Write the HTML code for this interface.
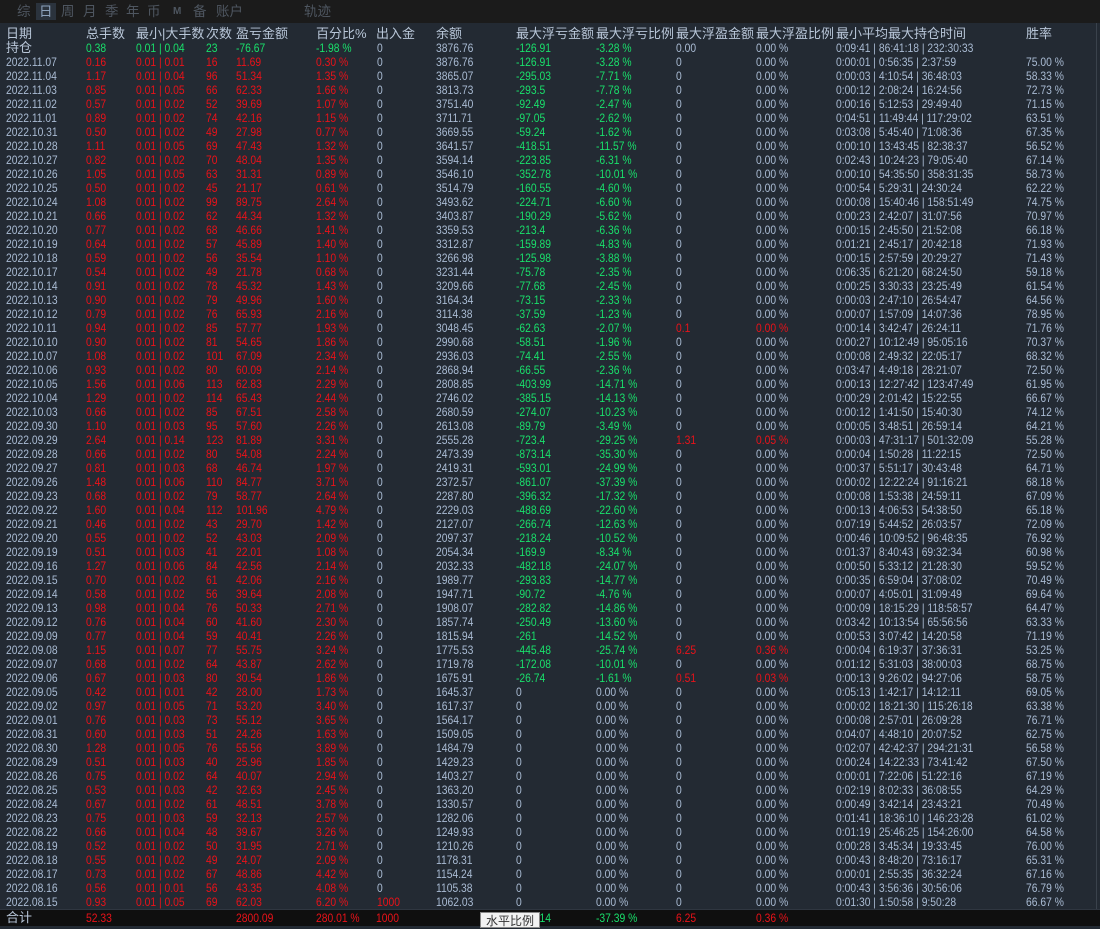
<!DOCTYPE html>
<html><head><meta charset="utf-8"><style>
*{margin:0;padding:0;box-sizing:border-box}
body{width:1100px;height:926px;background:#232a33;overflow:hidden;position:relative;font-family:"Liberation Sans","Noto Sans CJK SC",sans-serif;font-size:12px;color:#a9bbd3}
#top{position:absolute;left:0;top:0;width:1100px;height:23px;background:#1b1b1b}
#top span{position:absolute;top:3px;font-size:13.5px;line-height:17px;color:#4e5660}
#top .on{background:#2b333d;color:#8ea3bd;padding:0 3px;margin-left:-3px}
#hd{position:absolute;top:25px;left:0;height:17px;width:1100px;color:#b8c6d8}
#hd span{position:absolute;top:0;line-height:17px;font-size:13px}
#t{position:absolute;top:41px;left:0;width:1100px}
#t div{position:relative;height:14px;line-height:14px;white-space:nowrap}
#t a{position:absolute;top:0;transform:scaleX(.86);transform-origin:0 50%;color:#a9bbd3;text-decoration:none}
#t a:nth-child(1){left:6px}
#t a:nth-child(2){left:86px;color:#ea1219}
#t a:nth-child(3){left:136px;color:#ea1219}
#t a:nth-child(4){left:206px;color:#ea1219}
#t a:nth-child(5){left:236px;color:#ea1219}
#t a:nth-child(6){left:316px;color:#ea1219}
#t a:nth-child(7){left:377px}
#t a:nth-child(8){left:436px}
#t a:nth-child(9){left:516px;color:#19e06b}
#t a:nth-child(10){left:596px;color:#19e06b}
#t a:nth-child(11){left:676px}
#t a:nth-child(12){left:756px}
#t a:nth-child(13){left:836px}
#t a:nth-child(14){left:1026px}
#t a.R{color:#ea1219}
#t a.n{color:#a9bbd3}
#t div.p a{color:#19e06b}
#t div.p a:nth-child(1){font-size:13px;transform:none;color:#b8c6d8}
#t div.p a:nth-child(n+7){color:#a9bbd3}
#t div.p a:nth-child(9),#t div.p a:nth-child(10){color:#19e06b}
#tot{position:absolute;left:0;top:909px;width:1100px;height:17px;background:#0f0f0f;border-top:1px solid #2f3640}
#tot span{position:absolute;top:1px;line-height:14px;transform:scaleX(.86);transform-origin:0 50%;color:#ea1219}
#tip{position:absolute;left:480px;top:912px;width:60px;height:16px;background:#f2f2f2;border:1px solid #888;color:#333;font-size:12px;line-height:16px;text-align:center}
#sb{position:absolute;left:1096px;top:23px;width:1px;height:886px;background:#3a424c}
</style></head><body>
<div id="top">
<span style="left:17px">综</span><span class="on" style="left:39px">日</span><span style="left:61px">周</span><span style="left:83px">月</span><span style="left:105px">季</span><span style="left:126px">年</span><span style="left:147px">币</span><span style="left:173px;font-size:10px;font-weight:bold">M</span><span style="left:193px">备</span><span style="left:216px">账户</span><span style="left:304px">轨迹</span>
</div>
<div id="sb"></div>
<div id="hd">
<span style="left:6px">日期</span><span style="left:86px">总手数</span><span style="left:136px">最小|大手数</span><span style="left:206px">次数</span><span style="left:236px">盈亏金额</span><span style="left:316px">百分比%</span><span style="left:376px">出入金</span><span style="left:436px">余额</span><span style="left:516px">最大浮亏金额</span><span style="left:596px">最大浮亏比例</span><span style="left:676px">最大浮盈金额</span><span style="left:756px">最大浮盈比例</span><span style="left:836px">最小平均最大持仓时间</span><span style="left:1026px">胜率</span>
</div>
<div id="t">
<div class="p"><a>持仓</a><a>0.38</a><a>0.01 | 0.04</a><a>23</a><a>-76.67</a><a>-1.98 %</a><a>0</a><a>3876.76</a><a>-126.91</a><a>-3.28 %</a><a>0.00</a><a>0.00 %</a><a>0:09:41 | 86:41:18 | 232:30:33</a><a></a></div>
<div><a>2022.11.07</a><a>0.16</a><a>0.01 | 0.01</a><a>16</a><a>11.69</a><a>0.30 %</a><a>0</a><a>3876.76</a><a>-126.91</a><a>-3.28 %</a><a>0</a><a>0.00 %</a><a>0:00:01 | 0:56:35 | 2:37:59</a><a>75.00 %</a></div>
<div><a>2022.11.04</a><a>1.17</a><a>0.01 | 0.04</a><a>96</a><a>51.34</a><a>1.35 %</a><a>0</a><a>3865.07</a><a>-295.03</a><a>-7.71 %</a><a>0</a><a>0.00 %</a><a>0:00:03 | 4:10:54 | 36:48:03</a><a>58.33 %</a></div>
<div><a>2022.11.03</a><a>0.85</a><a>0.01 | 0.05</a><a>66</a><a>62.33</a><a>1.66 %</a><a>0</a><a>3813.73</a><a>-293.5</a><a>-7.78 %</a><a>0</a><a>0.00 %</a><a>0:00:12 | 2:08:24 | 16:24:56</a><a>72.73 %</a></div>
<div><a>2022.11.02</a><a>0.57</a><a>0.01 | 0.02</a><a>52</a><a>39.69</a><a>1.07 %</a><a>0</a><a>3751.40</a><a>-92.49</a><a>-2.47 %</a><a>0</a><a>0.00 %</a><a>0:00:16 | 5:12:53 | 29:49:40</a><a>71.15 %</a></div>
<div><a>2022.11.01</a><a>0.89</a><a>0.01 | 0.02</a><a>74</a><a>42.16</a><a>1.15 %</a><a>0</a><a>3711.71</a><a>-97.05</a><a>-2.62 %</a><a>0</a><a>0.00 %</a><a>0:04:51 | 11:49:44 | 117:29:02</a><a>63.51 %</a></div>
<div><a>2022.10.31</a><a>0.50</a><a>0.01 | 0.02</a><a>49</a><a>27.98</a><a>0.77 %</a><a>0</a><a>3669.55</a><a>-59.24</a><a>-1.62 %</a><a>0</a><a>0.00 %</a><a>0:03:08 | 5:45:40 | 71:08:36</a><a>67.35 %</a></div>
<div><a>2022.10.28</a><a>1.11</a><a>0.01 | 0.05</a><a>69</a><a>47.43</a><a>1.32 %</a><a>0</a><a>3641.57</a><a>-418.51</a><a>-11.57 %</a><a>0</a><a>0.00 %</a><a>0:00:10 | 13:43:45 | 82:38:37</a><a>56.52 %</a></div>
<div><a>2022.10.27</a><a>0.82</a><a>0.01 | 0.02</a><a>70</a><a>48.04</a><a>1.35 %</a><a>0</a><a>3594.14</a><a>-223.85</a><a>-6.31 %</a><a>0</a><a>0.00 %</a><a>0:02:43 | 10:24:23 | 79:05:40</a><a>67.14 %</a></div>
<div><a>2022.10.26</a><a>1.05</a><a>0.01 | 0.05</a><a>63</a><a>31.31</a><a>0.89 %</a><a>0</a><a>3546.10</a><a>-352.78</a><a>-10.01 %</a><a>0</a><a>0.00 %</a><a>0:00:10 | 54:35:50 | 358:31:35</a><a>58.73 %</a></div>
<div><a>2022.10.25</a><a>0.50</a><a>0.01 | 0.02</a><a>45</a><a>21.17</a><a>0.61 %</a><a>0</a><a>3514.79</a><a>-160.55</a><a>-4.60 %</a><a>0</a><a>0.00 %</a><a>0:00:54 | 5:29:31 | 24:30:24</a><a>62.22 %</a></div>
<div><a>2022.10.24</a><a>1.08</a><a>0.01 | 0.02</a><a>99</a><a>89.75</a><a>2.64 %</a><a>0</a><a>3493.62</a><a>-224.71</a><a>-6.60 %</a><a>0</a><a>0.00 %</a><a>0:00:08 | 15:40:46 | 158:51:49</a><a>74.75 %</a></div>
<div><a>2022.10.21</a><a>0.66</a><a>0.01 | 0.02</a><a>62</a><a>44.34</a><a>1.32 %</a><a>0</a><a>3403.87</a><a>-190.29</a><a>-5.62 %</a><a>0</a><a>0.00 %</a><a>0:00:23 | 2:42:07 | 31:07:56</a><a>70.97 %</a></div>
<div><a>2022.10.20</a><a>0.77</a><a>0.01 | 0.02</a><a>68</a><a>46.66</a><a>1.41 %</a><a>0</a><a>3359.53</a><a>-213.4</a><a>-6.36 %</a><a>0</a><a>0.00 %</a><a>0:00:15 | 2:45:50 | 21:52:08</a><a>66.18 %</a></div>
<div><a>2022.10.19</a><a>0.64</a><a>0.01 | 0.02</a><a>57</a><a>45.89</a><a>1.40 %</a><a>0</a><a>3312.87</a><a>-159.89</a><a>-4.83 %</a><a>0</a><a>0.00 %</a><a>0:01:21 | 2:45:17 | 20:42:18</a><a>71.93 %</a></div>
<div><a>2022.10.18</a><a>0.59</a><a>0.01 | 0.02</a><a>56</a><a>35.54</a><a>1.10 %</a><a>0</a><a>3266.98</a><a>-125.98</a><a>-3.88 %</a><a>0</a><a>0.00 %</a><a>0:00:15 | 2:57:59 | 20:29:27</a><a>71.43 %</a></div>
<div><a>2022.10.17</a><a>0.54</a><a>0.01 | 0.02</a><a>49</a><a>21.78</a><a>0.68 %</a><a>0</a><a>3231.44</a><a>-75.78</a><a>-2.35 %</a><a>0</a><a>0.00 %</a><a>0:06:35 | 6:21:20 | 68:24:50</a><a>59.18 %</a></div>
<div><a>2022.10.14</a><a>0.91</a><a>0.01 | 0.02</a><a>78</a><a>45.32</a><a>1.43 %</a><a>0</a><a>3209.66</a><a>-77.68</a><a>-2.45 %</a><a>0</a><a>0.00 %</a><a>0:00:25 | 3:30:33 | 23:25:49</a><a>61.54 %</a></div>
<div><a>2022.10.13</a><a>0.90</a><a>0.01 | 0.02</a><a>79</a><a>49.96</a><a>1.60 %</a><a>0</a><a>3164.34</a><a>-73.15</a><a>-2.33 %</a><a>0</a><a>0.00 %</a><a>0:00:03 | 2:47:10 | 26:54:47</a><a>64.56 %</a></div>
<div><a>2022.10.12</a><a>0.79</a><a>0.01 | 0.02</a><a>76</a><a>65.93</a><a>2.16 %</a><a>0</a><a>3114.38</a><a>-37.59</a><a>-1.23 %</a><a>0</a><a>0.00 %</a><a>0:00:07 | 1:57:09 | 14:07:36</a><a>78.95 %</a></div>
<div><a>2022.10.11</a><a>0.94</a><a>0.01 | 0.02</a><a>85</a><a>57.77</a><a>1.93 %</a><a>0</a><a>3048.45</a><a>-62.63</a><a>-2.07 %</a><a class="R">0.1</a><a class="R">0.00 %</a><a>0:00:14 | 3:42:47 | 26:24:11</a><a>71.76 %</a></div>
<div><a>2022.10.10</a><a>0.90</a><a>0.01 | 0.02</a><a>81</a><a>54.65</a><a>1.86 %</a><a>0</a><a>2990.68</a><a>-58.51</a><a>-1.96 %</a><a>0</a><a>0.00 %</a><a>0:00:27 | 10:12:49 | 95:05:16</a><a>70.37 %</a></div>
<div><a>2022.10.07</a><a>1.08</a><a>0.01 | 0.02</a><a>101</a><a>67.09</a><a>2.34 %</a><a>0</a><a>2936.03</a><a>-74.41</a><a>-2.55 %</a><a>0</a><a>0.00 %</a><a>0:00:08 | 2:49:32 | 22:05:17</a><a>68.32 %</a></div>
<div><a>2022.10.06</a><a>0.93</a><a>0.01 | 0.02</a><a>80</a><a>60.09</a><a>2.14 %</a><a>0</a><a>2868.94</a><a>-66.55</a><a>-2.36 %</a><a>0</a><a>0.00 %</a><a>0:03:47 | 4:49:18 | 28:21:07</a><a>72.50 %</a></div>
<div><a>2022.10.05</a><a>1.56</a><a>0.01 | 0.06</a><a>113</a><a>62.83</a><a>2.29 %</a><a>0</a><a>2808.85</a><a>-403.99</a><a>-14.71 %</a><a>0</a><a>0.00 %</a><a>0:00:13 | 12:27:42 | 123:47:49</a><a>61.95 %</a></div>
<div><a>2022.10.04</a><a>1.29</a><a>0.01 | 0.02</a><a>114</a><a>65.43</a><a>2.44 %</a><a>0</a><a>2746.02</a><a>-385.15</a><a>-14.13 %</a><a>0</a><a>0.00 %</a><a>0:00:29 | 2:01:42 | 15:22:55</a><a>66.67 %</a></div>
<div><a>2022.10.03</a><a>0.66</a><a>0.01 | 0.02</a><a>85</a><a>67.51</a><a>2.58 %</a><a>0</a><a>2680.59</a><a>-274.07</a><a>-10.23 %</a><a>0</a><a>0.00 %</a><a>0:00:12 | 1:41:50 | 15:40:30</a><a>74.12 %</a></div>
<div><a>2022.09.30</a><a>1.10</a><a>0.01 | 0.03</a><a>95</a><a>57.60</a><a>2.26 %</a><a>0</a><a>2613.08</a><a>-89.79</a><a>-3.49 %</a><a>0</a><a>0.00 %</a><a>0:00:05 | 3:48:51 | 26:59:14</a><a>64.21 %</a></div>
<div><a>2022.09.29</a><a>2.64</a><a>0.01 | 0.14</a><a>123</a><a>81.89</a><a>3.31 %</a><a>0</a><a>2555.28</a><a>-723.4</a><a>-29.25 %</a><a class="R">1.31</a><a class="R">0.05 %</a><a>0:00:03 | 47:31:17 | 501:32:09</a><a>55.28 %</a></div>
<div><a>2022.09.28</a><a>0.66</a><a>0.01 | 0.02</a><a>80</a><a>54.08</a><a>2.24 %</a><a>0</a><a>2473.39</a><a>-873.14</a><a>-35.30 %</a><a>0</a><a>0.00 %</a><a>0:00:04 | 1:50:28 | 11:22:15</a><a>72.50 %</a></div>
<div><a>2022.09.27</a><a>0.81</a><a>0.01 | 0.03</a><a>68</a><a>46.74</a><a>1.97 %</a><a>0</a><a>2419.31</a><a>-593.01</a><a>-24.99 %</a><a>0</a><a>0.00 %</a><a>0:00:37 | 5:51:17 | 30:43:48</a><a>64.71 %</a></div>
<div><a>2022.09.26</a><a>1.48</a><a>0.01 | 0.06</a><a>110</a><a>84.77</a><a>3.71 %</a><a>0</a><a>2372.57</a><a>-861.07</a><a>-37.39 %</a><a>0</a><a>0.00 %</a><a>0:00:02 | 12:22:24 | 91:16:21</a><a>68.18 %</a></div>
<div><a>2022.09.23</a><a>0.68</a><a>0.01 | 0.02</a><a>79</a><a>58.77</a><a>2.64 %</a><a>0</a><a>2287.80</a><a>-396.32</a><a>-17.32 %</a><a>0</a><a>0.00 %</a><a>0:00:08 | 1:53:38 | 24:59:11</a><a>67.09 %</a></div>
<div><a>2022.09.22</a><a>1.60</a><a>0.01 | 0.04</a><a>112</a><a>101.96</a><a>4.79 %</a><a>0</a><a>2229.03</a><a>-488.69</a><a>-22.60 %</a><a>0</a><a>0.00 %</a><a>0:00:13 | 4:06:53 | 54:38:50</a><a>65.18 %</a></div>
<div><a>2022.09.21</a><a>0.46</a><a>0.01 | 0.02</a><a>43</a><a>29.70</a><a>1.42 %</a><a>0</a><a>2127.07</a><a>-266.74</a><a>-12.63 %</a><a>0</a><a>0.00 %</a><a>0:07:19 | 5:44:52 | 26:03:57</a><a>72.09 %</a></div>
<div><a>2022.09.20</a><a>0.55</a><a>0.01 | 0.02</a><a>52</a><a>43.03</a><a>2.09 %</a><a>0</a><a>2097.37</a><a>-218.24</a><a>-10.52 %</a><a>0</a><a>0.00 %</a><a>0:00:46 | 10:09:52 | 96:48:35</a><a>76.92 %</a></div>
<div><a>2022.09.19</a><a>0.51</a><a>0.01 | 0.03</a><a>41</a><a>22.01</a><a>1.08 %</a><a>0</a><a>2054.34</a><a>-169.9</a><a>-8.34 %</a><a>0</a><a>0.00 %</a><a>0:01:37 | 8:40:43 | 69:32:34</a><a>60.98 %</a></div>
<div><a>2022.09.16</a><a>1.27</a><a>0.01 | 0.06</a><a>84</a><a>42.56</a><a>2.14 %</a><a>0</a><a>2032.33</a><a>-482.18</a><a>-24.07 %</a><a>0</a><a>0.00 %</a><a>0:00:50 | 5:33:12 | 21:28:30</a><a>59.52 %</a></div>
<div><a>2022.09.15</a><a>0.70</a><a>0.01 | 0.02</a><a>61</a><a>42.06</a><a>2.16 %</a><a>0</a><a>1989.77</a><a>-293.83</a><a>-14.77 %</a><a>0</a><a>0.00 %</a><a>0:00:35 | 6:59:04 | 37:08:02</a><a>70.49 %</a></div>
<div><a>2022.09.14</a><a>0.58</a><a>0.01 | 0.02</a><a>56</a><a>39.64</a><a>2.08 %</a><a>0</a><a>1947.71</a><a>-90.72</a><a>-4.76 %</a><a>0</a><a>0.00 %</a><a>0:00:07 | 4:05:01 | 31:09:49</a><a>69.64 %</a></div>
<div><a>2022.09.13</a><a>0.98</a><a>0.01 | 0.04</a><a>76</a><a>50.33</a><a>2.71 %</a><a>0</a><a>1908.07</a><a>-282.82</a><a>-14.86 %</a><a>0</a><a>0.00 %</a><a>0:00:09 | 18:15:29 | 118:58:57</a><a>64.47 %</a></div>
<div><a>2022.09.12</a><a>0.76</a><a>0.01 | 0.04</a><a>60</a><a>41.60</a><a>2.30 %</a><a>0</a><a>1857.74</a><a>-250.49</a><a>-13.60 %</a><a>0</a><a>0.00 %</a><a>0:03:42 | 10:13:54 | 65:56:56</a><a>63.33 %</a></div>
<div><a>2022.09.09</a><a>0.77</a><a>0.01 | 0.04</a><a>59</a><a>40.41</a><a>2.26 %</a><a>0</a><a>1815.94</a><a>-261</a><a>-14.52 %</a><a>0</a><a>0.00 %</a><a>0:00:53 | 3:07:42 | 14:20:58</a><a>71.19 %</a></div>
<div><a>2022.09.08</a><a>1.15</a><a>0.01 | 0.07</a><a>77</a><a>55.75</a><a>3.24 %</a><a>0</a><a>1775.53</a><a>-445.48</a><a>-25.74 %</a><a class="R">6.25</a><a class="R">0.36 %</a><a>0:00:04 | 6:19:37 | 37:36:31</a><a>53.25 %</a></div>
<div><a>2022.09.07</a><a>0.68</a><a>0.01 | 0.02</a><a>64</a><a>43.87</a><a>2.62 %</a><a>0</a><a>1719.78</a><a>-172.08</a><a>-10.01 %</a><a>0</a><a>0.00 %</a><a>0:01:12 | 5:31:03 | 38:00:03</a><a>68.75 %</a></div>
<div><a>2022.09.06</a><a>0.67</a><a>0.01 | 0.03</a><a>80</a><a>30.54</a><a>1.86 %</a><a>0</a><a>1675.91</a><a>-26.74</a><a>-1.61 %</a><a class="R">0.51</a><a class="R">0.03 %</a><a>0:00:13 | 9:26:02 | 94:27:06</a><a>58.75 %</a></div>
<div><a>2022.09.05</a><a>0.42</a><a>0.01 | 0.01</a><a>42</a><a>28.00</a><a>1.73 %</a><a>0</a><a>1645.37</a><a class="n">0</a><a class="n">0.00 %</a><a>0</a><a>0.00 %</a><a>0:05:13 | 1:42:17 | 14:12:11</a><a>69.05 %</a></div>
<div><a>2022.09.02</a><a>0.97</a><a>0.01 | 0.05</a><a>71</a><a>53.20</a><a>3.40 %</a><a>0</a><a>1617.37</a><a class="n">0</a><a class="n">0.00 %</a><a>0</a><a>0.00 %</a><a>0:00:02 | 18:21:30 | 115:26:18</a><a>63.38 %</a></div>
<div><a>2022.09.01</a><a>0.76</a><a>0.01 | 0.03</a><a>73</a><a>55.12</a><a>3.65 %</a><a>0</a><a>1564.17</a><a class="n">0</a><a class="n">0.00 %</a><a>0</a><a>0.00 %</a><a>0:00:08 | 2:57:01 | 26:09:28</a><a>76.71 %</a></div>
<div><a>2022.08.31</a><a>0.60</a><a>0.01 | 0.03</a><a>51</a><a>24.26</a><a>1.63 %</a><a>0</a><a>1509.05</a><a class="n">0</a><a class="n">0.00 %</a><a>0</a><a>0.00 %</a><a>0:04:07 | 4:48:10 | 20:07:52</a><a>62.75 %</a></div>
<div><a>2022.08.30</a><a>1.28</a><a>0.01 | 0.05</a><a>76</a><a>55.56</a><a>3.89 %</a><a>0</a><a>1484.79</a><a class="n">0</a><a class="n">0.00 %</a><a>0</a><a>0.00 %</a><a>0:02:07 | 42:42:37 | 294:21:31</a><a>56.58 %</a></div>
<div><a>2022.08.29</a><a>0.51</a><a>0.01 | 0.03</a><a>40</a><a>25.96</a><a>1.85 %</a><a>0</a><a>1429.23</a><a class="n">0</a><a class="n">0.00 %</a><a>0</a><a>0.00 %</a><a>0:00:24 | 14:22:33 | 73:41:42</a><a>67.50 %</a></div>
<div><a>2022.08.26</a><a>0.75</a><a>0.01 | 0.02</a><a>64</a><a>40.07</a><a>2.94 %</a><a>0</a><a>1403.27</a><a class="n">0</a><a class="n">0.00 %</a><a>0</a><a>0.00 %</a><a>0:00:01 | 7:22:06 | 51:22:16</a><a>67.19 %</a></div>
<div><a>2022.08.25</a><a>0.53</a><a>0.01 | 0.03</a><a>42</a><a>32.63</a><a>2.45 %</a><a>0</a><a>1363.20</a><a class="n">0</a><a class="n">0.00 %</a><a>0</a><a>0.00 %</a><a>0:02:19 | 8:02:33 | 36:08:55</a><a>64.29 %</a></div>
<div><a>2022.08.24</a><a>0.67</a><a>0.01 | 0.02</a><a>61</a><a>48.51</a><a>3.78 %</a><a>0</a><a>1330.57</a><a class="n">0</a><a class="n">0.00 %</a><a>0</a><a>0.00 %</a><a>0:00:49 | 3:42:14 | 23:43:21</a><a>70.49 %</a></div>
<div><a>2022.08.23</a><a>0.75</a><a>0.01 | 0.03</a><a>59</a><a>32.13</a><a>2.57 %</a><a>0</a><a>1282.06</a><a class="n">0</a><a class="n">0.00 %</a><a>0</a><a>0.00 %</a><a>0:01:41 | 18:36:10 | 146:23:28</a><a>61.02 %</a></div>
<div><a>2022.08.22</a><a>0.66</a><a>0.01 | 0.04</a><a>48</a><a>39.67</a><a>3.26 %</a><a>0</a><a>1249.93</a><a class="n">0</a><a class="n">0.00 %</a><a>0</a><a>0.00 %</a><a>0:01:19 | 25:46:25 | 154:26:00</a><a>64.58 %</a></div>
<div><a>2022.08.19</a><a>0.52</a><a>0.01 | 0.02</a><a>50</a><a>31.95</a><a>2.71 %</a><a>0</a><a>1210.26</a><a class="n">0</a><a class="n">0.00 %</a><a>0</a><a>0.00 %</a><a>0:00:28 | 3:45:34 | 19:33:45</a><a>76.00 %</a></div>
<div><a>2022.08.18</a><a>0.55</a><a>0.01 | 0.02</a><a>49</a><a>24.07</a><a>2.09 %</a><a>0</a><a>1178.31</a><a class="n">0</a><a class="n">0.00 %</a><a>0</a><a>0.00 %</a><a>0:00:43 | 8:48:20 | 73:16:17</a><a>65.31 %</a></div>
<div><a>2022.08.17</a><a>0.73</a><a>0.01 | 0.02</a><a>67</a><a>48.86</a><a>4.42 %</a><a>0</a><a>1154.24</a><a class="n">0</a><a class="n">0.00 %</a><a>0</a><a>0.00 %</a><a>0:00:01 | 2:55:35 | 36:32:24</a><a>67.16 %</a></div>
<div><a>2022.08.16</a><a>0.56</a><a>0.01 | 0.01</a><a>56</a><a>43.35</a><a>4.08 %</a><a>0</a><a>1105.38</a><a class="n">0</a><a class="n">0.00 %</a><a>0</a><a>0.00 %</a><a>0:00:43 | 3:56:36 | 30:56:06</a><a>76.79 %</a></div>
<div><a>2022.08.15</a><a>0.93</a><a>0.01 | 0.05</a><a>69</a><a>62.03</a><a>6.20 %</a><a class="R">1000</a><a>1062.03</a><a class="n">0</a><a class="n">0.00 %</a><a>0</a><a>0.00 %</a><a>0:01:30 | 1:50:58 | 9:50:28</a><a>66.67 %</a></div>
</div>
<div id="tot">
<span style="left:6px;color:#b8c6d8;transform:none;font-size:13px">合计</span><span style="left:86px">52.33</span><span style="left:236px">2800.09</span><span style="left:316px">280.01 %</span><span style="left:376px">1000</span><span style="left:516px;color:#19e06b">-873.14</span><span style="left:596px;color:#19e06b">-37.39 %</span><span style="left:676px">6.25</span><span style="left:756px">0.36 %</span>
</div>
<div id="tip">水平比例</div>
</body></html>
